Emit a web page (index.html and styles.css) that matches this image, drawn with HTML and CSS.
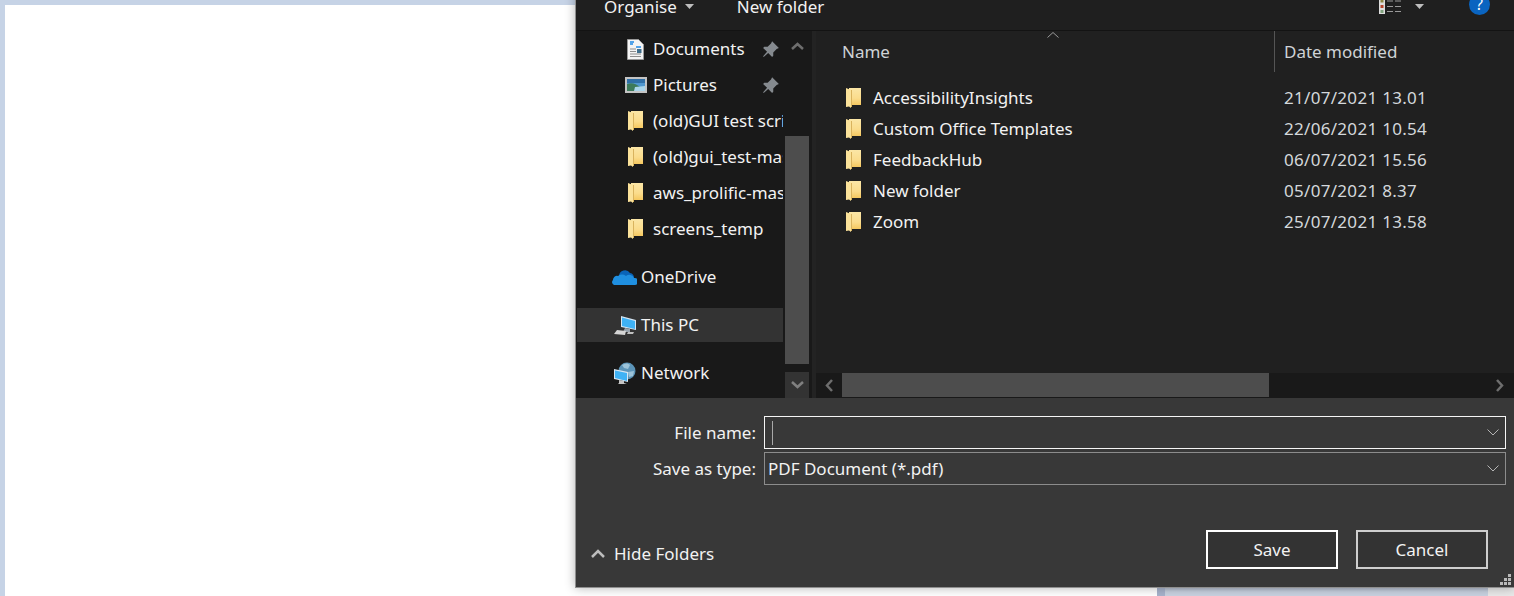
FILE: index.html
```html
<!DOCTYPE html>
<html lang="en">
<head>
  <meta charset="UTF-8">
  <title>Save as</title>
  <link rel="stylesheet" href="styles.css">
</head>
<body>
  <svg class="defs" width="0" height="0">
    <defs>
      <linearGradient id="folderFill" x1="0" y1="0" x2="0" y2="1">
        <stop offset="0" stop-color="#fbe6a6"/>
        <stop offset="0.6" stop-color="#fbdc8c"/>
        <stop offset="1" stop-color="#f5c860"/>
      </linearGradient>
    </defs>
    <symbol id="folder" viewBox="0 0 15 20">
      <path d="M3 0h12v17H3z" fill="url(#folderFill)"/>
      <path d="M0 0l5 2v18l-2-1.500-3 .5z" fill="#fbe29a"/>
      <path d="M5.500 2v17" stroke="#d9b35e" fill="none"/>
    </symbol>
    <symbol id="pin" viewBox="1 1 16 16">
      <path d="M10 2l6 6-2 1-3 3 0 3-1 1-3.500-3.500L2.500 16 2 15.500l3.500-4L2 8l1-1h3l3-3z" fill="#858a8f"/>
    </symbol>
  </svg>

  <div class="page">
    <div class="sheet"></div>
    <div class="strip"></div>
    <div class="page-end"></div>
  </div>

  <div class="dialog">
    <div class="toolbar">
      <span class="tool">Organise</span>
      <svg class="caret-down organise-caret" width="9" height="5"><path d="M0 0h9L4.500 5z"/></svg>
      <span class="tool new-folder">New folder</span>
      <svg class="views" width="22" height="16" viewBox="0 0 22 16">
        <path d="M0 0h6v15H0z" fill="#ddd"/>
        <path d="M1.500 .5h3v3h-3z" fill="#8c8440"/>
        <path d="M1.500 6h3v3h-3z" fill="#b5452c"/>
        <path d="M1.500 11h3v3h-3z" fill="#7fa27c"/>
        <path d="M8 2h6M16 2h6M8 7.500h6M16 7.500h6M8 12.500h6M16 12.500h6" stroke="#9a9a9a" fill="none"/>
      </svg>
      <svg class="caret-down views-caret" width="9" height="5"><path d="M0 0h9L4.500 5z"/></svg>
      <span class="help">?</span>
    </div>

    <div class="main">
      <div class="nav">
        <div class="nav-rows">
          <div class="nav-row pinned">
            <svg class="nav-icon" width="17" height="21" viewBox="0 0 17 21">
              <path d="M.5.500h11l5 5v15H.5z" fill="#f4f4f4" stroke="#9a9a9a"/>
              <path d="M3 3h4M3 5h3M9 8h5" stroke="#1e88e5" stroke-width="1.500" fill="none"/>
              <path d="M3 10h6M3 12.500h6M3 15h11M3 17.500h11" stroke="#8d8d8d" fill="none"/>
              <path d="M10 10h4.500v4H10z" fill="#3f6e8c"/>
            </svg>
            <span>Documents</span>
            <svg class="pin" width="18" height="18"><use href="#pin"/></svg>
          </div>
          <div class="nav-row pinned">
            <svg class="nav-icon pictures-icon" width="22" height="16" viewBox="0 0 22 16">
              <path d="M0 0h22v16H0z" fill="#c4c4c4"/>
              <path d="M2 2h18v12H2z" fill="#4f97cf"/>
              <path d="M2 2h18v4H2z" fill="#2f6fa6"/>
              <path d="M2 7c5-2 9 0 13 3l5 1v3H2z" fill="#3d7a5a"/>
              <path d="M10 10l10-1v5H9z" fill="#a9d5ea"/>
            </svg>
            <span>Pictures</span>
            <svg class="pin" width="18" height="18"><use href="#pin"/></svg>
          </div>
          <div class="nav-row pinned">
            <svg class="nav-icon folder-icon" width="15" height="20"><use href="#folder"/></svg>
            <span>(old)GUI test script</span>
          </div>
          <div class="nav-row pinned">
            <svg class="nav-icon folder-icon" width="15" height="20"><use href="#folder"/></svg>
            <span>(old)gui_test-master</span>
          </div>
          <div class="nav-row pinned">
            <svg class="nav-icon folder-icon" width="15" height="20"><use href="#folder"/></svg>
            <span>aws_prolific-master</span>
          </div>
          <div class="nav-row pinned">
            <svg class="nav-icon folder-icon" width="15" height="20"><use href="#folder"/></svg>
            <span>screens_temp</span>
          </div>

          <div class="nav-row top-level spaced">
            <svg class="nav-icon onedrive-icon" width="25" height="16" viewBox="0 0 25 16">
              <path d="M7 7a6 6 0 0 1 11-3 5 5 0 0 1 4 5l-9 3z" fill="#0a64b8"/>
              <path d="M2 16a3 3 0 0 1-1-5 4 4 0 0 1 5-4 7 7 0 0 1 8 0 5 5 0 0 1 8 2 3.500 3.500 0 0 1 1 7z" fill="#1f8fe0"/>
            </svg>
            <span>OneDrive</span>
          </div>
          <div class="nav-row top-level spaced selected">
            <svg class="nav-icon" width="24" height="21" viewBox="0 0 24 21">
              <path d="M8 1l15 4v10L8 12z" fill="#d8e6f2"/>
              <path d="M9 2.500l13 3.500v8L9 11z" fill="#3fb2f5"/>
              <path d="M12 13l5 1 0 3-7 0z" fill="#9aa4ae"/>
              <path d="M4 15l9 1-1 4-11-1z" fill="#d5d5d5"/>
              <path d="M15 17h6l-1 2h-6z" fill="#c0c0c0"/>
            </svg>
            <span>This PC</span>
          </div>
          <div class="nav-row top-level spaced">
            <svg class="nav-icon" width="24" height="23" viewBox="0 0 24 23">
              <circle cx="14" cy="9" r="8.500" fill="#5b94b8"/>
              <path d="M9 3c3-2 6-2 8 0l-2 4-4-1zM15 10l6-1-1 5-4 1z" fill="#9cc3d9"/>
              <path d="M1 7l14 3v10L1 17z" fill="#d8e6f2"/>
              <path d="M2 8.500l12 2.500v8L2 16z" fill="#3fb2f5"/>
              <path d="M6 18l5 1v2l3 1H5l1-1z" fill="#c5c5c5"/>
            </svg>
            <span>Network</span>
          </div>
        </div>
        <div class="nav-scroll">
          <div class="scroll-up">
            <svg width="13" height="8" viewBox="0 0 13 8"><path d="M1 7l5.500-5L12 7" fill="none" stroke="#6e6e6e" stroke-width="2.500"/></svg>
          </div>
          <div class="nav-thumb"></div>
          <div class="scroll-down">
            <svg width="13" height="8" viewBox="0 0 13 8"><path d="M1 1l5.500 5L12 1" fill="none" stroke="#808080" stroke-width="2.500"/></svg>
          </div>
        </div>
      </div>

      <div class="list">
        <div class="list-head">
          <div class="col-name">Name
            <svg class="sort" width="12" height="6" viewBox="0 0 12 6"><path d="M.5 5.500L6 .5l5.500 5" fill="none" stroke="#9a9a9a"/></svg>
          </div>
          <div class="col-date">Date modified</div>
        </div>
        <div class="files">
          <div class="file">
            <div class="file-name"><svg width="15" height="20"><use href="#folder"/></svg>AccessibilityInsights</div>
            <div class="file-date">21/07/2021 13.01</div>
          </div>
          <div class="file">
            <div class="file-name"><svg width="15" height="20"><use href="#folder"/></svg>Custom Office Templates</div>
            <div class="file-date">22/06/2021 10.54</div>
          </div>
          <div class="file">
            <div class="file-name"><svg width="15" height="20"><use href="#folder"/></svg>FeedbackHub</div>
            <div class="file-date">06/07/2021 15.56</div>
          </div>
          <div class="file">
            <div class="file-name"><svg width="15" height="20"><use href="#folder"/></svg>New folder</div>
            <div class="file-date">05/07/2021 8.37</div>
          </div>
          <div class="file">
            <div class="file-name"><svg width="15" height="20"><use href="#folder"/></svg>Zoom</div>
            <div class="file-date">25/07/2021 13.58</div>
          </div>
        </div>
        <div class="hscroll">
          <div class="scroll-left">
            <svg width="8" height="13" viewBox="0 0 8 13"><path d="M7 1L2 6.500 7 12" fill="none" stroke="#6e6e6e" stroke-width="2.500"/></svg>
          </div>
          <div class="h-thumb"></div>
          <div class="scroll-right">
            <svg width="8" height="13" viewBox="0 0 8 13"><path d="M1 1l5 5.500L1 12" fill="none" stroke="#6e6e6e" stroke-width="2.500"/></svg>
          </div>
        </div>
      </div>
    </div>

    <div class="bottom">
      <div class="form">
        <label class="form-label">File name:</label>
        <div class="field active">
          <span class="text-cursor"></span>
          <svg class="chevron" width="12" height="7" viewBox="0 0 12 7"><path d="M.5.500L6 6l5.500-5.500" fill="none" stroke="#b5b5b5"/></svg>
        </div>
        <label class="form-label">Save as type:</label>
        <div class="field">
          <span>PDF Document (*.pdf)</span>
          <svg class="chevron" width="12" height="7" viewBox="0 0 12 7"><path d="M.5.500L6 6l5.500-5.500" fill="none" stroke="#b5b5b5"/></svg>
        </div>
      </div>
      <div class="actions">
        <div class="hide-folders">
          <svg width="14" height="9" viewBox="0 0 14 9"><path d="M1 8l6-6 6 6" fill="none" stroke="#bdbdbd" stroke-width="2.500"/></svg>
          <span>Hide Folders</span>
        </div>
        <button class="btn default">Save</button>
        <button class="btn">Cancel</button>
      </div>
      <svg class="grip" width="11" height="11" viewBox="0 0 11 11">
        <path d="M8 0h3v3H8zM4 4h3v3H4zM8 4h3v3H8zM0 8h3v3H0zM4 8h3v3H4zM8 8h3v3H8z" fill="#b9b9b9"/>
      </svg>
    </div>
  </div>
</body>
</html>
```

FILE: styles.css
```css
html, body {
  margin: 0;
  height: 100%;
  overflow: hidden;
}

body {
  background-color: #c6d3e6;
  font-family: "Noto Sans", "Open Sans", sans-serif;
  font-size: 17px;
  color: #f2f2f2;
}

.defs {
  position: absolute;
}

/* document behind the dialog */
.page {
  height: 100%;
  padding: 5px 0 0 5px;
  box-sizing: border-box;
  display: flex;
}

.sheet {
  width: 1152px;
  flex: none;
  background-color: #fff;
}

.strip {
  width: 331px;
  flex: none;
  box-sizing: border-box;
  background: linear-gradient(to top, #c8d2e0 4px, #aeb8c9 9px);
  border-left: 8px solid #a7b3cc;
}

.page-end {
  flex: 1;
  background-color: #e9e9e9;
}

/* save dialog */
.dialog {
  position: absolute;
  left: 575px;
  top: -10px;
  right: 0;
  height: 597px;
  display: flex;
  flex-direction: column;
  overflow: hidden;
  background-color: #383838;
  border-left: 1px solid #8f8f8f;
  border-bottom: 1px solid #8f8f8f;
  box-shadow: 0 0 10px rgba(0, 0, 0, 0.3);
}

.toolbar {
  height: 41px;
  flex: none;
  display: flex;
  align-items: flex-start;
  padding-top: 8px;
  box-sizing: border-box;
  background-color: #1f1f1f;
  border-bottom: 1px solid #131313;
  line-height: 18px;
}

.tool {
  margin-left: 28px;
}

.new-folder {
  margin-left: 43px;
}

.caret-down {
  fill: #bdbdbd;
  flex: none;
}

.organise-caret {
  margin: 6px 0 0 8px;
}

.views {
  margin: 1px 0 0 auto;
}

.views-caret {
  margin: 6px 0 0 14px;
}

.help {
  width: 21px;
  height: 21px;
  margin: -4px 24px 0 45px;
  border-radius: 50%;
  background-color: #0a64c0;
  color: #fff;
  font-size: 16px;
  line-height: 21px;
  text-align: center;
}

.main {
  flex: none;
  height: 367px;
  display: flex;
}

.nav {
  width: 240px;
  flex: none;
  display: flex;
  background-color: #191919;
  border-right: 4px solid #232323;
  box-sizing: border-box;
}

.nav-rows {
  width: 206px;
  margin: 0 2px 0 1px;
  padding-top: 1px;
  flex: none;
}

.nav-row {
  height: 34px;
  margin-bottom: 2px;
  display: flex;
  align-items: center;
  overflow: hidden;
  white-space: nowrap;
  line-height: 32px;
}

.nav-row span {
  margin-top: -1px;
}

.nav-row.spaced {
  margin-top: 14px;
}

.nav-row.selected {
  background-color: #333;
}

.nav-icon {
  flex: none;
}

.pinned {
  padding-left: 50px;
}

.pinned .nav-icon {
  margin-right: 9px;
}

.pinned .pictures-icon {
  margin-left: -2px;
  margin-right: 6px;
}

.pinned .folder-icon {
  margin-left: 1px;
  margin-right: 10px;
}

.top-level {
  padding-left: 36px;
}

.top-level .nav-icon {
  margin-right: 4px;
}

.top-level .onedrive-icon {
  margin-left: -1px;
}

.pin {
  margin-left: auto;
  margin-right: 3px;
}

.nav-scroll {
  width: 24px;
  flex: none;
  display: flex;
  flex-direction: column;
}

.scroll-up {
  height: 30px;
  display: flex;
  justify-content: center;
  padding-top: 11px;
  box-sizing: border-box;
}

.nav-thumb {
  margin-top: 75px;
  height: 228px;
  background-color: #4d4d4d;
}

.scroll-down {
  margin-top: 8px;
  height: 26px;
  display: flex;
  align-items: center;
  justify-content: center;
  background-color: #333;
}

.list {
  flex: 1;
  min-width: 0;
  display: flex;
  flex-direction: column;
  background-color: #202020;
}

.list-head {
  height: 41px;
  flex: none;
  display: flex;
  color: #cfd3d6;
}

.col-name {
  width: 459px;
  flex: none;
  box-sizing: border-box;
  padding: 9px 0 0 26px;
  position: relative;
  border-right: 1px solid #555;
}

.sort {
  position: absolute;
  left: 231px;
  top: 1px;
}

.col-date {
  padding: 9px 0 0 9px;
}

.files {
  flex: 1;
  padding-top: 10px;
}

.file {
  height: 31px;
  display: flex;
  align-items: center;
}

.file-name {
  width: 468px;
  flex: none;
  box-sizing: border-box;
  padding-left: 30px;
  display: flex;
  align-items: center;
}

.file-name svg {
  margin-right: 12px;
}

.file-date {
  color: #d4d8db;
  letter-spacing: 0.3px;
}

.hscroll {
  height: 25px;
  flex: none;
  display: flex;
  background-color: #191919;
}

.scroll-left {
  width: 26px;
  display: flex;
  align-items: center;
  justify-content: center;
}

.h-thumb {
  width: 427px;
  height: 24px;
  background-color: #4d4d4d;
}

.scroll-right {
  margin-left: auto;
  width: 29px;
  display: flex;
  align-items: center;
  justify-content: center;
}

.bottom {
  flex: 1;
  position: relative;
  display: flex;
  flex-direction: column;
  padding: 18px 8px 18px 0;
}

.form {
  display: grid;
  grid-template-columns: 180px 1fr;
  column-gap: 8px;
  row-gap: 3px;
}

.form-label {
  text-align: right;
  line-height: 33px;
}

.field {
  height: 33px;
  box-sizing: border-box;
  display: flex;
  align-items: center;
  justify-content: space-between;
  padding: 0 6px 0 3px;
  border: 1px solid #8c8c8c;
}

.field.active {
  border-color: #f5f5f5;
}

.text-cursor {
  width: 1px;
  height: 24px;
  margin-left: 4px;
  background-color: #a8a8a8;
}

.actions {
  margin-top: auto;
  display: flex;
  align-items: center;
  padding-right: 18px;
  gap: 18px;
}

.hide-folders {
  margin-right: auto;
  margin-top: 7px;
  padding-left: 15px;
  display: flex;
  align-items: center;
  gap: 9px;
}

.btn {
  width: 132px;
  height: 39px;
  padding: 0;
  box-sizing: border-box;
  background-color: #333;
  border: 2px solid #cfcfcf;
  color: #f2f2f2;
  font: inherit;
}

.btn.default {
  border-color: #fff;
}

.grip {
  position: absolute;
  right: 3px;
  bottom: 2px;
}
```
